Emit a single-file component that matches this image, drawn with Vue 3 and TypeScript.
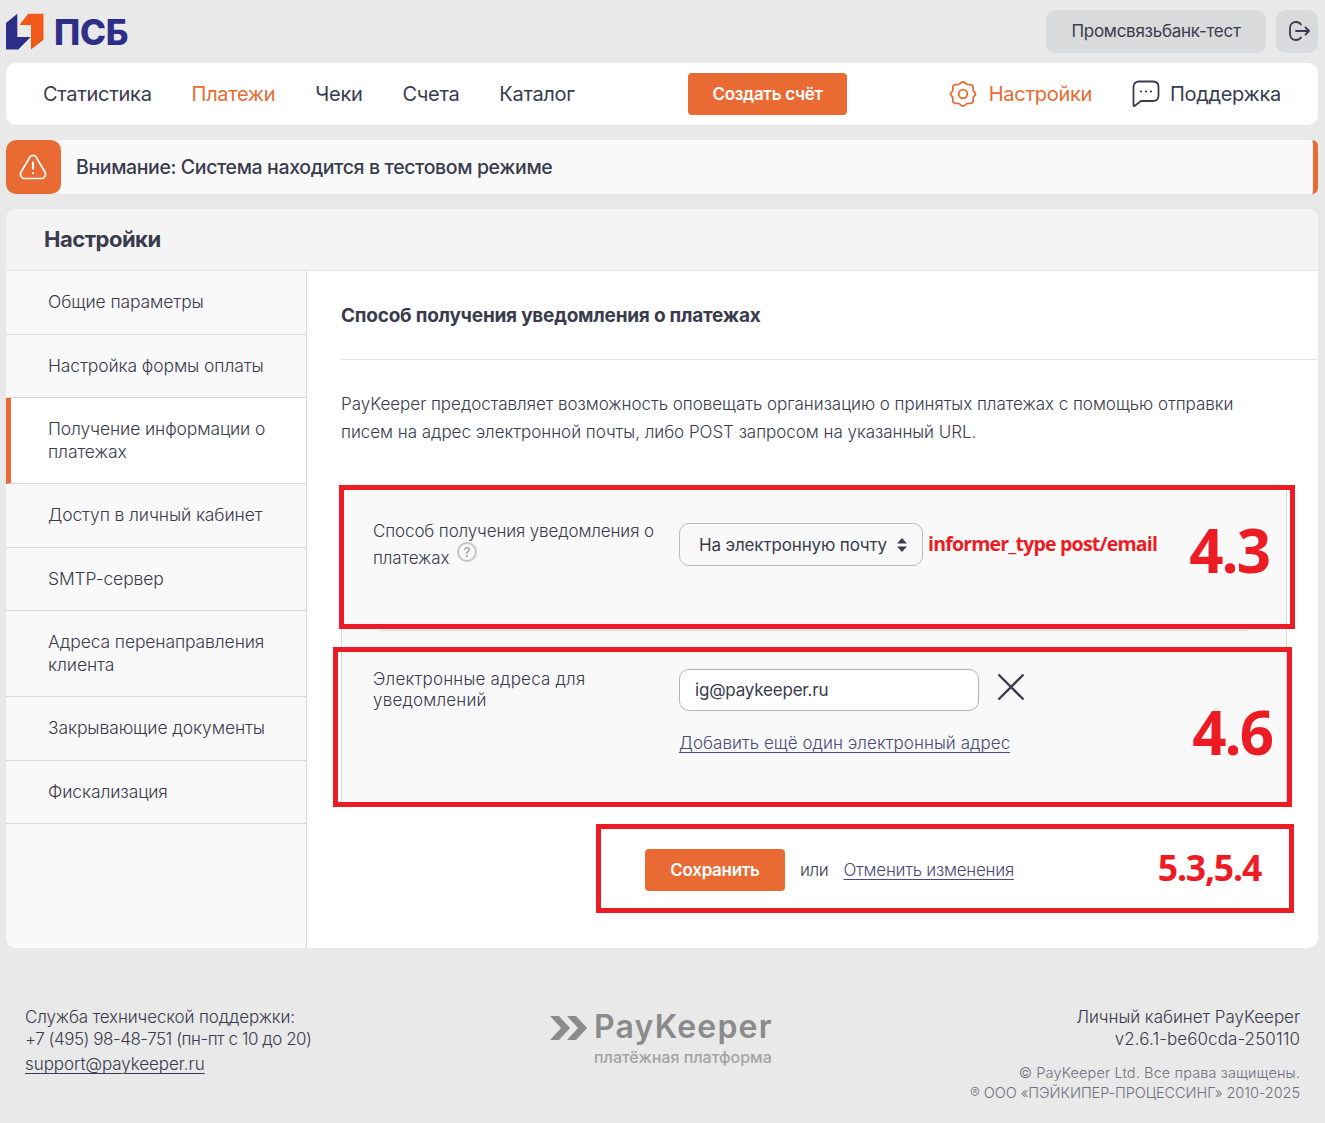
<script setup lang="ts">
const navItems = [
  { label: 'Статистика', active: false },
  { label: 'Платежи', active: true },
  { label: 'Чеки', active: false },
  { label: 'Счета', active: false },
  { label: 'Каталог', active: false }
]

const sideItems = [
  { label: 'Общие параметры', active: false },
  { label: 'Настройка формы оплаты', active: false },
  { label: 'Получение информации о платежах', active: true },
  { label: 'Доступ в личный кабинет', active: false },
  { label: 'SMTP-сервер', active: false },
  { label: 'Адреса перенаправления клиента', active: false },
  { label: 'Закрывающие документы', active: false },
  { label: 'Фискализация', active: false }
]
</script>

<template>
  <div class="page">
    <header class="top">
      <div class="logo">
        <svg width="38" height="37" viewBox="0 0 38 37">
          <path d="M0 10 L11.300 .7 V24 H24.700 L12.300 36.500 H0 Z" fill="#2d2e87" />
          <path d="M13.300 12 L22.300 .7 H37.500 V26.700 L25 36.500 V12 Z" fill="#f0591a" />
        </svg>
        <span class="logo-text">ПСБ</span>
      </div>
      <div class="user">
        <button class="user-name" type="button">Промсвязьбанк-тест</button>
        <button class="logout" type="button" aria-label="Выход">
          <svg width="22" height="22" viewBox="0 0 22 22" fill="none" stroke="#3a3b4d" stroke-width="1.800" stroke-linecap="round" stroke-linejoin="round">
            <path d="M13 4.500 C12 3 10.500 2 8 2 C4.500 2 2 4.500 2 8 V14 C2 17.500 4.500 20 8 20 C10.500 20 12 19 13 17.500" />
            <path d="M8 11 H21 M17.500 7.500 L21 11 L17.500 14.500" />
          </svg>
        </button>
      </div>
    </header>

    <nav class="nav">
      <div class="nav-links">
        <a v-for="item in navItems" :key="item.label" :class="{ active: item.active }">{{ item.label }}</a>
      </div>
      <button class="btn create" type="button">Создать счёт</button>
      <div class="nav-right">
        <a class="active settings">
          <svg width="28" height="28" viewBox="0 0 28 28" fill="none" stroke="#e96a32" stroke-width="1.800" stroke-linejoin="round">
            <path d="M14 2 C16 2 16.500 4 18.500 4.500 C20.500 5 22 3.800 23.500 5.500 C25 7.200 23.800 8.500 24.300 10.500 C24.800 12 26.500 12.500 26.500 14 C26.500 15.500 24.800 16 24.300 17.500 C23.800 19.500 25 20.800 23.500 22.500 C22 24.200 20.500 23 18.500 23.500 C16.500 24 16 26 14 26 C12 26 11.500 24 9.500 23.500 C7.500 23 6 24.200 4.500 22.500 C3 20.800 4.200 19.500 3.700 17.500 C3.200 16 1.500 15.500 1.500 14 C1.500 12.500 3.200 12 3.700 10.500 C4.200 8.500 3 7.200 4.500 5.500 C6 3.800 7.500 5 9.500 4.500 C11.500 4 12 2 14 2 Z" />
            <circle cx="14" cy="14" r="4.300" />
          </svg>
          Настройки
        </a>
        <a>
          <svg width="28" height="28" viewBox="0 0 28 28" fill="none" stroke="#3a3b4d" stroke-width="1.800" stroke-linejoin="round">
            <path d="M7 1.500 H21 C24.500 1.500 26.500 3.500 26.500 7 V15.500 C26.500 19 24.500 21 21 21 H9 L2.500 26 C2 26.300 1.500 26 1.500 25.500 V7 C1.500 3.500 3.500 1.500 7 1.500 Z" />
            <circle cx="9" cy="11.500" r="1.100" fill="#3a3b4d" stroke="none" />
            <circle cx="14" cy="11.500" r="1.100" fill="#3a3b4d" stroke="none" />
            <circle cx="19" cy="11.500" r="1.100" fill="#3a3b4d" stroke="none" />
          </svg>
          Поддержка
        </a>
      </div>
    </nav>

    <div class="alert">
      <div class="alert-icon">
        <svg width="28" height="26" viewBox="0 0 28 26" fill="none" stroke="#fff" stroke-width="1.700" stroke-linecap="round" stroke-linejoin="round">
          <path d="M11 3 C12.500 .8 15.500 .8 17 3 L26 18 C27.500 21 25.500 24.500 22.500 24.500 H5.500 C2.500 24.500 .5 21 2 18 Z" />
          <path d="M14 8.500 V14.500 M14 19 V19.200" stroke-width="2.200" />
        </svg>
      </div>
      <span class="alert-text">Внимание: Система находится в тестовом режиме</span>
    </div>

    <main class="card">
      <h1 class="card-head">Настройки</h1>
      <div class="card-body">
        <aside class="side">
          <a v-for="item in sideItems" :key="item.label" :class="{ active: item.active }">{{ item.label }}</a>
        </aside>
        <section class="content">
          <h2>Способ получения уведомления о платежах</h2>
          <p class="lead">
            PayKeeper предоставляет возможность оповещать организацию о принятых платежах с помощью отправки писем на адрес электронной почты, либо POST запросом на указанный URL.
          </p>

          <div class="form">
            <div class="form-row first">
              <label>
                Способ получения уведомления о платежах
                <span class="hint">?</span>
              </label>
              <div class="control">
                <div class="select">
                  На электронную почту
                  <svg width="10" height="14" viewBox="0 0 10 14" fill="#3a3b4d">
                    <path d="M5 0 L10 5.500 H0 Z M5 14 L0 8.500 H10 Z" />
                  </svg>
                </div>
              </div>
            </div>
            <div class="form-row second">
              <label>Электронные адреса для уведомлений</label>
              <div class="control">
                <div class="email-line">
                  <div class="input">ig@paykeeper.ru</div>
                  <svg width="28" height="28" viewBox="0 0 28 28" stroke="#3a3b4d" stroke-width="2.400">
                    <path d="M1.500 1.500 L26.500 26.500 M26.500 1.500 L1.500 26.500" />
                  </svg>
                </div>
                <a class="link add">Добавить ещё один электронный адрес</a>
              </div>
            </div>
          </div>

          <div class="actions">
            <button class="btn save" type="button">Сохранить</button>
            <span class="or">или</span>
            <a class="link">Отменить изменения</a>
          </div>

          <div class="mark mark-a">
            <span class="mark-note">informer_type post/email</span>
            <span class="mark-num">4.3</span>
          </div>
          <div class="mark mark-b">
            <span class="mark-num">4.6</span>
          </div>
          <div class="mark mark-c">
            <span class="mark-small">5.3,5.4</span>
          </div>
        </section>
      </div>
    </main>

    <footer class="foot">
      <div class="foot-left">
        <div class="fl-title">Служба технической поддержки:</div>
        <div class="fl-phone">+7 (495) 98-48-751 (пн-пт с 10 до 20)</div>
        <a>support@paykeeper.ru</a>
      </div>
      <div class="foot-logo">
        <svg width="38" height="24" viewBox="0 0 38 24" fill="#8b8b8b">
          <path d="M0 0 H9 L20 12 L9 24 H0 L11 12 Z M17 0 H26 L37 12 L26 24 H17 L28 12 Z" />
        </svg>
        <div class="foot-brand">
          <span class="brand-name">PayKeeper</span>
          <span class="brand-sub">платёжная платформа</span>
        </div>
      </div>
      <div class="foot-right">
        <div class="fr-name">Личный кабинет PayKeeper</div>
        <div class="fr-ver">v2.6.1-be60cda-250110</div>
        <small class="fr-copy">© PayKeeper Ltd. Все права защищены.</small>
        <small class="fr-org">® ООО «ПЭЙКИПЕР-ПРОЦЕССИНГ» 2010-2025</small>
      </div>
    </footer>
  </div>
</template>

<style>
body {
  background: #e9e9e9;
}
</style>

<style scoped>
.page {
  position: relative;
  box-sizing: border-box;
  width: 1325px;
  height: 1123px;
  padding: 0 7px 0 6px;
  overflow: hidden;
  background: #e9e9e9;
  color: #3a3b4d;
  font-family: Inter, "Noto Sans", sans-serif;
}

a {
  cursor: pointer;
}

.top {
  display: flex;
  align-items: center;
  justify-content: space-between;
  height: 63px;
}

.logo {
  display: flex;
  align-items: center;
  gap: 10px;
}

.logo-text {
  color: #2d2e87;
  font-size: 35px;
  font-weight: 800;
  letter-spacing: -0.3px;
}

.user {
  display: flex;
  gap: 10px;
  margin-top: -1px;
}

.user-name,
.logout {
  height: 43px;
  border: none;
  border-radius: 10px;
  background: #d9dadc;
  color: #3a3b4d;
  font: inherit;
}

.user-name {
  width: 220px;
  font-size: 17px;
  letter-spacing: -0.27px;
}

.logout {
  display: flex;
  align-items: center;
  justify-content: center;
  width: 42px;
  padding: 0 0 0 4px;
}

.nav {
  display: flex;
  align-items: center;
  height: 62px;
  padding: 0 37px;
  border-radius: 10px;
  background: #fff;
  font-size: 20px;
  letter-spacing: -0.3px;
}

.nav-links {
  display: flex;
  gap: 40px;
  width: 645px;
}

.nav .active,
.nav-links .active {
  color: #e96a32;
}

.nav-right {
  display: flex;
  align-items: center;
  gap: 40px;
  margin-left: auto;
}

.nav-right a {
  display: flex;
  align-items: center;
  gap: 10px;
}

.nav-right a.settings {
  gap: 12px;
}

.btn {
  height: 42px;
  border: none;
  border-radius: 4px;
  background: #e96a32;
  color: #fff;
  font: inherit;
  font-size: 17px;
  font-weight: 600;
  letter-spacing: -0.3px;
}

.create {
  width: 159px;
}

.alert {
  display: flex;
  align-items: center;
  height: 54px;
  margin-top: 15px;
  border-right: 5px solid #e96a32;
  border-radius: 10px 6px 6px 10px;
  background: #f9f9f9;
}

.alert-icon {
  display: flex;
  align-items: center;
  justify-content: center;
  width: 55px;
  height: 54px;
  padding-right: 1px;
  box-sizing: border-box;
  border-radius: 10px;
  background: #e96a32;
}

.alert-text {
  margin: -1px 0 0 15px;
  font-size: 19.500px;
  font-weight: 500;
  letter-spacing: -0.38px;
}

.card {
  height: 739px;
  margin-top: 15px;
  overflow: hidden;
  border-radius: 10px;
  background: #fff;
}

.card-head {
  box-sizing: border-box;
  height: 62px;
  margin: 0;
  padding: 0 38px;
  border-bottom: 1px solid #e4e4e4;
  background: #f4f4f4;
  font-size: 22px;
  font-weight: 700;
  line-height: 61px;
  letter-spacing: -0.5px;
}

.card-body {
  display: flex;
  height: 677px;
}

.side {
  display: flex;
  flex-direction: column;
  flex: none;
  width: 301px;
  box-sizing: border-box;
  border-right: 1px solid #d9d9d9;
  background: #f9f9f9;
}

.side a {
  box-sizing: border-box;
  padding: 20px 28px 20px 42px;
  border-bottom: 1px solid #d9d9d9;
  font-size: 17.500px;
  font-weight: 300;
  line-height: 22.500px;
  letter-spacing: -0.12px;
}

.side a.active {
  border-left: 5px solid #e96a32;
  padding-left: 37px;
  background: #fff;
}

.content {
  flex: 1;
  min-width: 0;
  padding: 0 0 0 34px;
}

h2 {
  box-sizing: border-box;
  height: 89px;
  margin: 0;
  border-bottom: 1px solid #e4e4e4;
  font-size: 19px;
  font-weight: 700;
  line-height: 89px;
  letter-spacing: -0.22px;
}

.lead {
  width: 920px;
  margin: 30px 0 0;
  font-size: 17px;
  font-weight: 300;
  line-height: 28px;
  letter-spacing: -0.03px;
}

.form {
  width: 946px;
  margin-top: 40px;
  border-right: 1px solid #d9d9d9;
  border-left: 1px solid #d9d9d9;
  background: #f9f9f9;
  box-sizing: border-box;
}

.form-row {
  display: flex;
  position: relative;
  box-sizing: border-box;
  padding-left: 31px;
  font-size: 17px;
  font-weight: 300;
}

.form-row.first {
  height: 145px;
  padding-top: 37px;
}

.form-row.first::after {
  content: "";
  position: absolute;
  left: 37px;
  right: 38px;
  bottom: 0;
  height: 1px;
  background: #dedede;
}

.form-row.second {
  height: 172px;
  padding-top: 38px;
}

label {
  flex: none;
  width: 306px;
  margin-top: -5px;
  line-height: 27px;
  letter-spacing: -0.12px;
}

.second label {
  margin-top: 0;
  line-height: 21px;
  letter-spacing: 0.2px;
}

.hint {
  display: inline-block;
  position: relative;
  top: -7px;
  box-sizing: border-box;
  width: 20px;
  height: 20px;
  margin-left: 3px;
  border: 2px solid #c4c4c4;
  border-radius: 50%;
  color: #a9a9a9;
  font-size: 13px;
  font-weight: 600;
  line-height: 16px;
  text-align: center;
  vertical-align: middle;
}

.control {
  display: flex;
  flex-direction: column;
  align-items: flex-start;
}

.select {
  display: flex;
  align-items: center;
  justify-content: space-between;
  box-sizing: border-box;
  width: 244px;
  height: 43px;
  padding: 0 15px 0 19px;
  border: 1px solid #bdbdbd;
  border-radius: 10px;
  font-weight: 400;
  letter-spacing: -0.15px;
}

.email-line {
  display: flex;
  align-items: center;
  gap: 18px;
}

.input {
  box-sizing: border-box;
  width: 300px;
  height: 42px;
  padding: 0 15px;
  border: 1px solid #b5b5b5;
  border-radius: 10px;
  background: #fff;
  font-weight: 400;
  line-height: 40px;
  letter-spacing: -0.2px;
}

.email-line svg {
  margin-top: -6px;
}

.link {
  color: #4a4a78;
  font-weight: 300;
  letter-spacing: -0.25px;
  text-decoration: underline;
  text-underline-offset: 3px;
  text-decoration-thickness: 1px;
}

.add {
  margin-top: 22px;
  letter-spacing: 0.05px;
}

.actions {
  display: flex;
  align-items: center;
  gap: 15px;
  margin: 46px 0 0 304px;
  font-size: 17px;
  font-weight: 300;
}

.or {
  letter-spacing: -0.35px;
}

.save {
  width: 140px;
}

/* red notes laid over the screenshot */
.mark {
  position: absolute;
  box-sizing: border-box;
  border: 5px solid #ed1c24;
  color: #ed1c24;
  font-family: "Open Sans", sans-serif;
  font-weight: 700;
}

.mark-a {
  left: 339px;
  top: 485px;
  width: 956px;
  height: 144px;
}

.mark-b {
  left: 333px;
  top: 647px;
  width: 959px;
  height: 160px;
}

.mark-c {
  left: 596px;
  top: 824px;
  width: 698px;
  height: 89px;
}

.mark-note {
  position: absolute;
  left: 584px;
  top: 42px;
  font-size: 19.500px;
  letter-spacing: -0.8px;
  line-height: 24px;
  white-space: nowrap;
}

.mark-num {
  position: absolute;
  right: 21px;
  top: 22px;
  font-size: 60px;
  letter-spacing: -2px;
  line-height: 76px;
}

.mark-b .mark-num {
  right: 15px;
  top: 42px;
}

.mark-small {
  position: absolute;
  right: 28px;
  top: 15px;
  font-size: 35.500px;
  letter-spacing: -1.200px;
  line-height: 46px;
}

.foot {
  display: flex;
  box-sizing: border-box;
  padding: 58px 18px 0 19px;
  font-weight: 300;
}

.foot-left {
  flex: none;
  width: 525px;
  font-size: 17px;
  line-height: 22px;
}

.fl-title {
  letter-spacing: -0.13px;
}

.fl-phone {
  letter-spacing: -0.48px;
}

.foot-left a {
  display: block;
  margin-top: 3px;
  letter-spacing: -0.05px;
  text-decoration: underline;
  text-underline-offset: 3px;
  text-decoration-thickness: 1px;
}

.foot-logo {
  display: flex;
  align-items: flex-start;
  gap: 6px;
  margin-top: 9px;
  color: #8b8b8b;
}

.foot-logo svg {
  margin-top: 1px;
}

.foot-brand {
  display: flex;
  flex-direction: column;
}

.brand-name {
  font-size: 32px;
  font-weight: 600;
  line-height: 24px;
  letter-spacing: 1.200px;
}

.brand-sub {
  margin-top: 10px;
  color: #a3a3a3;
  font-size: 16px;
  font-weight: 500;
  line-height: 16px;
  white-space: nowrap;
}

.foot-right {
  display: flex;
  flex-direction: column;
  align-items: flex-end;
  margin-left: auto;
  font-size: 17px;
  line-height: 22px;
}

.fr-name {
  letter-spacing: -0.03px;
}

.fr-ver {
  letter-spacing: 0.08px;
}

.foot-right small {
  color: #6f7080;
  font-size: 14.500px;
  line-height: 20px;
}

.fr-copy {
  margin-top: 13px;
  letter-spacing: 0.12px;
}

.fr-org {
  letter-spacing: -0.05px;
}
</style>
